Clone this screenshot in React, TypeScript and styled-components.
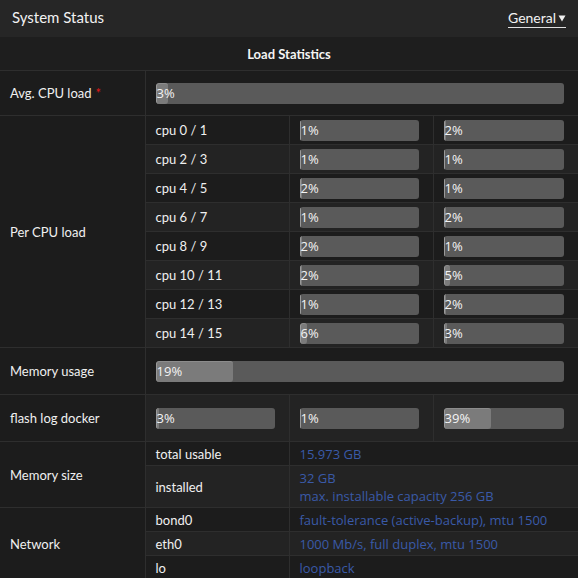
import React from "react";
import styled, { createGlobalStyle } from "styled-components";

const GlobalStyle = createGlobalStyle`
  html, body {
    margin: 0;
    padding: 0;
    background: #1c1c1c;
  }
`;

const Page = styled.div`
  width: 578px;
  height: 578px;
  overflow: hidden;
  background: #1c1c1c;
  color: #f0f0f0;
  font-family: Lato, "Noto Sans", sans-serif;
`;

const TopBar = styled.div`
  height: 37px;
  box-sizing: border-box;
  display: flex;
  align-items: center;
  justify-content: space-between;
  padding: 0 12px 3px 12px;
  background: #262626;
`;

const Title = styled.div`
  font-size: 15px;
  color: #f2f2f2;
`;

const Select = styled.div`
  display: flex;
  align-items: center;
  gap: 2px;
  font-size: 14px;
  color: #f2f2f2;
  border-bottom: 1px solid #e0e0e0;
  padding-bottom: 1px;
  margin-top: 3px;
`;

const Table = styled.table`
  width: 578px;
  border-collapse: collapse;
  table-layout: fixed;
  font-size: 13px;
`;

const Row = styled.tr<{ $alt?: boolean }>`
  background: ${(p) => (p.$alt ? "#232323" : "#1c1c1c")};
`;

const Head = styled.th`
  height: 31px;
  font-weight: 700;
  font-size: 13px;
  color: #f4f4f4;
  border-bottom: 1px solid #2e2e2e;
  background: #1e1e1e;
`;

const Label = styled.td`
  padding: 0 10px;
  border: 1px solid #2e2e2e;
  border-left: none;
  background: #1c1c1c;
  color: #f0f0f0;
`;

const Sub = styled.td<{ $h?: number }>`
  height: ${(p) => p.$h ?? 28}px;
  padding: 0 10px;
  border: 1px solid #2e2e2e;
  color: #f0f0f0;
`;

const BarCell = styled.td<{ $h?: number }>`
  height: ${(p) => p.$h ?? 28}px;
  padding: 0 14px 0 10px;
  border: 1px solid #2e2e2e;
  border-right: none;
`;

const Value = styled.td`
  padding: 2px 10px;
  border: 1px solid #2e2e2e;
  border-right: none;
  color: #3a5aa8;
  font-family: "Open Sans", sans-serif;
  font-size: 13px;
  line-height: 18px;
`;

const Star = styled.span`
  color: #e01818;
  margin-left: 4px;
`;

const Track = styled.div`
  position: relative;
  height: 21px;
  border-radius: 3px;
  background: #5a5a5a;
  overflow: hidden;
`;

const Fill = styled.div`
  height: 100%;
  box-sizing: border-box;
  background: #7b7b7b;
  border-left: 1px solid #9a9a9a;
  border-top: 1px solid #8c8c8c;
  border-radius: 3px;
`;

const BarText = styled.span`
  position: absolute;
  left: 1px;
  top: 0;
  line-height: 21px;
  font-family: "Open Sans", sans-serif;
  font-size: 13px;
  color: #f4f4f4;
`;

function Bar({ pct }: { pct: number }) {
  return (
    <Track>
      <Fill style={{ width: `${Math.max(pct, 1)}%` }} />
      <BarText>{pct}%</BarText>
    </Track>
  );
}

const cpus: [string, number, number][] = [
  ["cpu 0 / 1", 1, 2],
  ["cpu 2 / 3", 1, 1],
  ["cpu 4 / 5", 2, 1],
  ["cpu 6 / 7", 1, 2],
  ["cpu 8 / 9", 2, 1],
  ["cpu 10 / 11", 2, 5],
  ["cpu 12 / 13", 1, 2],
  ["cpu 14 / 15", 6, 3],
];

export default function App() {
  return (
    <Page>
      <GlobalStyle />
      <TopBar>
        <Title>System Status</Title>
        <Select>
          General
          <svg width="8" height="8" viewBox="0 0 8 8">
            <path d="M0.5 1.5h7L4 7.5z" fill="#f0f0f0" />
          </svg>
        </Select>
      </TopBar>
      <Table>
        <colgroup>
          <col style={{ width: 145 }} />
          <col style={{ width: 144 }} />
          <col style={{ width: 144 }} />
          <col style={{ width: 145 }} />
        </colgroup>
        <tbody>
          <tr>
            <Head colSpan={4}>Load Statistics</Head>
          </tr>
          <Row>
            <Label>
              Avg. CPU load<Star>*</Star>
            </Label>
            <BarCell colSpan={3} $h={44}>
              <Bar pct={3} />
            </BarCell>
          </Row>
          {cpus.map(([name, a, b], i) => (
            <Row key={name} $alt={i % 2 === 1}>
              {i === 0 && <Label rowSpan={8}>Per CPU load</Label>}
              <Sub>{name}</Sub>
              <BarCell>
                <Bar pct={a} />
              </BarCell>
              <BarCell>
                <Bar pct={b} />
              </BarCell>
            </Row>
          ))}
          <Row>
            <Label>Memory usage</Label>
            <BarCell colSpan={3} $h={46}>
              <Bar pct={19} />
            </BarCell>
          </Row>
          <Row $alt>
            <Label>flash log docker</Label>
            <BarCell $h={46}>
              <Bar pct={3} />
            </BarCell>
            <BarCell $h={46}>
              <Bar pct={1} />
            </BarCell>
            <BarCell $h={46}>
              <Bar pct={39} />
            </BarCell>
          </Row>
          <Row>
            <Label rowSpan={2}>Memory size</Label>
            <Sub $h={23}>total usable</Sub>
            <Value colSpan={2}>15.973 GB</Value>
          </Row>
          <Row $alt>
            <Sub $h={41}>installed</Sub>
            <Value colSpan={2}>
              32 GB
              <br />
              max. installable capacity 256 GB
            </Value>
          </Row>
          <Row>
            <Label rowSpan={3}>Network</Label>
            <Sub $h={23}>bond0</Sub>
            <Value colSpan={2}>fault-tolerance (active-backup), mtu 1500</Value>
          </Row>
          <Row $alt>
            <Sub $h={23}>eth0</Sub>
            <Value colSpan={2}>1000 Mb/s, full duplex, mtu 1500</Value>
          </Row>
          <Row>
            <Sub $h={23}>lo</Sub>
            <Value colSpan={2}>loopback</Value>
          </Row>
        </tbody>
      </Table>
    </Page>
  );
}
